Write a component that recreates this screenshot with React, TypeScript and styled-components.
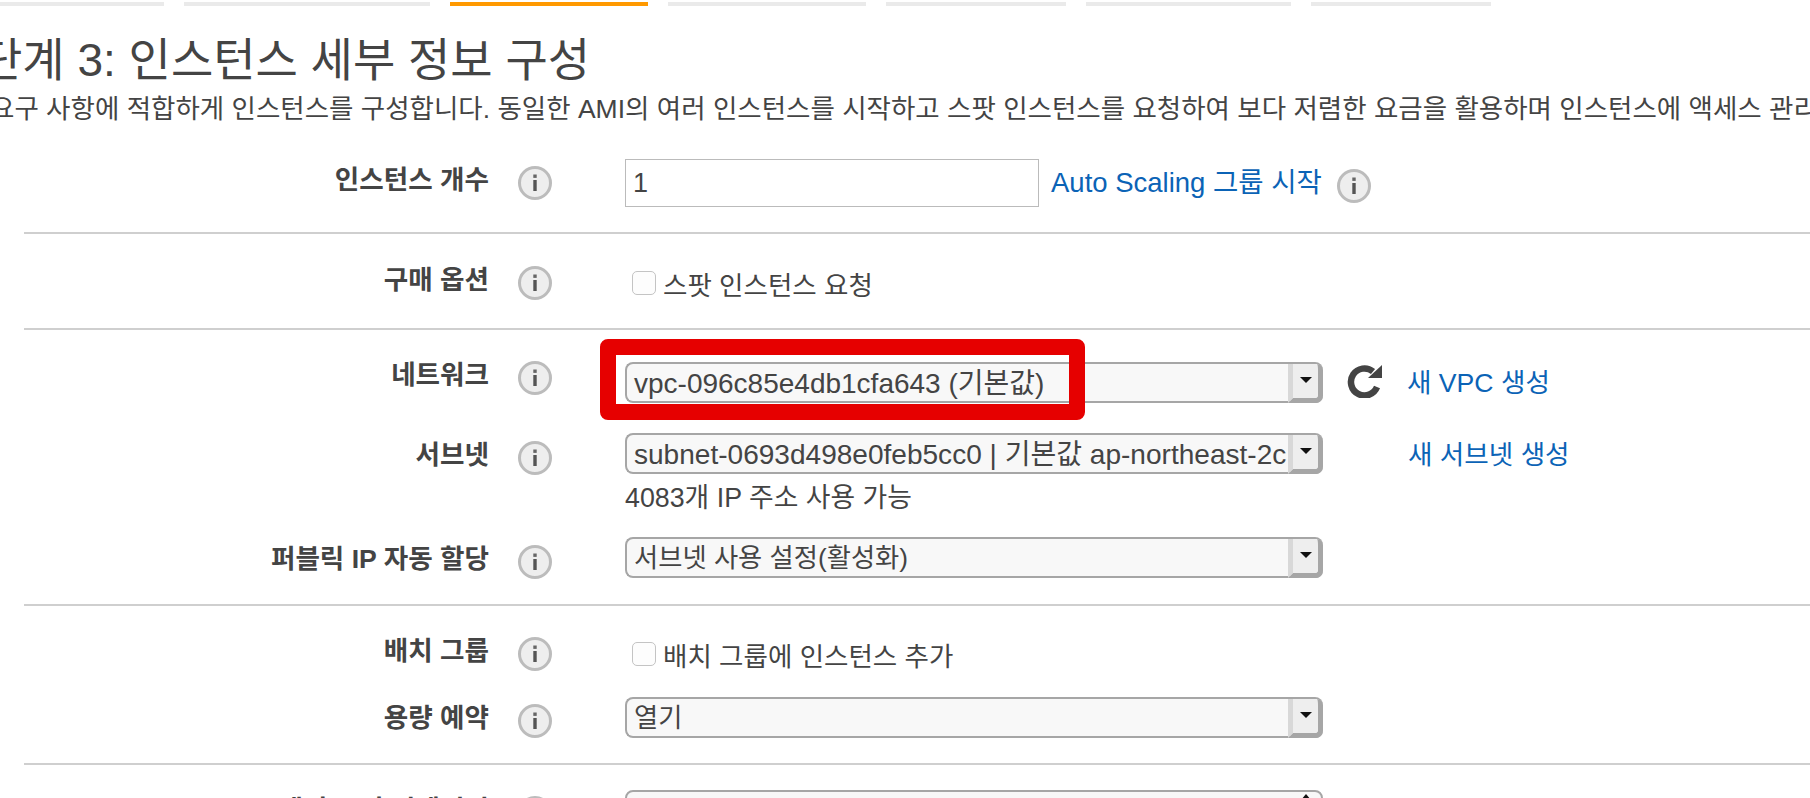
import React from 'react';
import styled, { createGlobalStyle } from 'styled-components';

const GlobalStyle = createGlobalStyle`
  html, body {
    margin: 0;
    padding: 0;
    background: #fff;
  }
`;

const Page = styled.div`
  width: 1810px;
  height: 798px;
  overflow: hidden;
  color: #444;
  font-family: "Liberation Sans", "Noto Sans CJK KR", sans-serif;
`;

const Steps = styled.div`
  display: flex;
  gap: 20px;
  padding-top: 2px;
`;

const Step = styled.div<{ $width: number; $active?: boolean }>`
  width: ${(p) => p.$width}px;
  height: 4px;
  background: ${(p) => (p.$active ? '#ff9900' : '#eaeaea')};
`;

const Title = styled.h1`
  margin: 30px 0 0 -20px;
  font-size: 46px;
  line-height: 48px;
  font-weight: 400;
  white-space: nowrap;
`;

const Intro = styled.p`
  margin: 10px 0 0 -10px;
  font-size: 26.5px;
  line-height: 30px;
  white-space: nowrap;
`;

const Form = styled.div`
  margin: 35px 0 0 24px;
`;

const Section = styled.section<{ $top: number; $bottom: number; $gap?: number; $first?: boolean }>`
  display: flex;
  flex-direction: column;
  gap: ${(p) => p.$gap ?? 30}px;
  padding: ${(p) => p.$top}px 0 ${(p) => p.$bottom}px;
  border-top: ${(p) => (p.$first ? 'none' : '2px solid #cfcfcf')};
`;

const Row = styled.div`
  display: flex;
  align-items: flex-start;
`;

const LabelGroup = styled.div<{ $top: number }>`
  display: flex;
  align-items: flex-start;
  flex: none;
  width: 601px;
  margin-top: ${(p) => p.$top}px;
`;

const Label = styled.div`
  flex: none;
  width: 465px;
  text-align: right;
  font-size: 26.6px;
  font-weight: 700;
  line-height: 30px;
  white-space: nowrap;
`;

const InfoIcon = styled.svg<{ $left: number; $top: number }>`
  flex: none;
  width: 36px;
  height: 36px;
  margin: ${(p) => p.$top}px 0 0 ${(p) => p.$left}px;
`;

const Control = styled.div`
  display: flex;
  align-items: flex-start;
`;

const Stack = styled.div`
  display: flex;
  flex-direction: column;
`;

const TextInput = styled.div`
  box-sizing: border-box;
  width: 414px;
  height: 48px;
  padding-left: 7px;
  border: 1px solid #bbb;
  font-size: 27px;
  line-height: 46px;
`;

const LinkText = styled.a<{ $left: number; $top: number; $size?: number }>`
  margin: ${(p) => p.$top}px 0 0 ${(p) => p.$left}px;
  color: #0b63b6;
  font-size: ${(p) => p.$size ?? 26.6}px;
  line-height: 30px;
  white-space: nowrap;
`;

const CheckRow = styled.label`
  display: flex;
  align-items: center;
  gap: 7px;
  height: 36px;
  margin-left: 7px;
  font-size: 26.5px;
`;

const CheckBox = styled.span`
  box-sizing: border-box;
  width: 24px;
  height: 24px;
  border: 1px solid #c4c4c4;
  border-radius: 5px;
  background: #fdfdfd;
`;

const SelectBox = styled.div`
  position: relative;
  box-sizing: border-box;
  display: flex;
  flex: none;
  width: 698px;
  height: 41px;
  border: 2px solid #a6a6a6;
  border-right-width: 0;
  border-radius: 8px;
  background: #f8f8f8;
`;

const SelectValue = styled.div<{ $size: number }>`
  flex: 1;
  min-width: 0;
  padding-left: 7px;
  overflow: hidden;
  font-size: ${(p) => p.$size}px;
  line-height: 39px;
  white-space: nowrap;
`;

const SelectButton = styled.div`
  box-sizing: border-box;
  flex: none;
  display: flex;
  align-items: center;
  justify-content: center;
  width: 35px;
  height: 39px;
  margin-bottom: -2px;
  padding-bottom: 2px;
  border-left: 5px solid #d8d8d8;
  border-right: 5px solid #a6a6a6;
  border-bottom: 5px solid #a6a6a6;
  border-top-right-radius: 6px;
  border-bottom-right-radius: 7px;
  background: #eeeeee;

  &::after {
    content: '';
    border-left: 6px solid transparent;
    border-right: 6px solid transparent;
    border-top: 6px solid #111;
  }
`;

/* the last select is cut by the window: only the tip of its up arrow shows */
const ListBox = styled(SelectBox)`
  justify-content: flex-end;
  padding-right: 10px;
  border-right-width: 2px;

  &::after {
    content: '';
    margin-top: 2px;
    height: 0;
    border-left: 5px solid transparent;
    border-right: 5px solid transparent;
    border-bottom: 6px solid #111;
  }
`;

const RedFrame = styled.div`
  position: absolute;
  left: -27px;
  top: -25px;
  box-sizing: border-box;
  width: 485px;
  height: 81px;
  border: 16px solid #e60000;
  border-radius: 8px;
`;

const RefreshIcon = styled.svg`
  flex: none;
  width: 36px;
  height: 34px;
  margin: 2px 0 0 23px;
`;

const Note = styled.div`
  margin: 9px 0 -6px;
  font-size: 26.8px;
  line-height: 30px;
`;

const Info = ({ left = 28, top = 0 }: { left?: number; top?: number }) => (
  <InfoIcon $left={left} $top={top} viewBox="0 0 36 36">
    <circle cx="18" cy="18" r="15.5" fill="#eeeeee" stroke="#bcbcbc" strokeWidth="3" />
    <rect x="16.3" y="15" width="3.4" height="11" fill="#555" />
    <rect x="16.3" y="9.5" width="3.4" height="3.4" fill="#666" />
  </InfoIcon>
);

const Select = ({ value, size = 26.3, children }: { value: string; size?: number; children?: React.ReactNode }) => (
  <SelectBox>
    <SelectValue $size={size}>{value}</SelectValue>
    <SelectButton />
    {children}
  </SelectBox>
);

const stepWidths = [164, 246, 198, 198, 180, 205, 180];

const App = () => (
  <Page>
    <GlobalStyle />
    <Steps>
      {stepWidths.map((w, i) => (
        <Step key={i} $width={w} $active={i === 2} />
      ))}
    </Steps>
    <Title>단계 3: 인스턴스 세부 정보 구성</Title>
    <Intro>
      요구 사항에 적합하게 인스턴스를 구성합니다. 동일한 AMI의 여러 인스턴스를 시작하고 스팟 인스턴스를 요청하여 보다 저렴한 요금을 활용하며
      인스턴스에 액세스 관리 역할을 할당하는 등 다양한 기능을 사용할 수 있습니다.
    </Intro>
    <Form>
      <Section $first $top={0} $bottom={25}>
        <Row>
          <LabelGroup $top={6}>
            <Label>인스턴스 개수</Label>
            <Info />
          </LabelGroup>
          <Control>
            <TextInput>1</TextInput>
            <LinkText $left={12} $top={9} $size={27.5}>Auto Scaling 그룹 시작</LinkText>
            <Info left={14} top={9} />
          </Control>
        </Row>
      </Section>
      <Section $top={31} $bottom={27}>
        <Row>
          <LabelGroup $top={0}>
            <Label>구매 옵션</Label>
            <Info />
          </LabelGroup>
          <CheckRow>
            <CheckBox />
            스팟 인스턴스 요청
          </CheckRow>
        </Row>
      </Section>
      <Section $top={32} $bottom={24}>
        <Row>
          <LabelGroup $top={-2}>
            <Label>네트워크</Label>
            <Info />
          </LabelGroup>
          <Control>
            <Select value="vpc-096c85e4db1cfa643 (기본값)" size={28}>
              <RedFrame />
            </Select>
            <RefreshIcon viewBox="0 0 36 34">
              <path d="M31 23 A13.5 13.5 0 1 1 27 7.5" fill="none" stroke="#444" strokeWidth="6.5" />
              <polygon points="36,1 36,14 22,14" fill="#444" />
            </RefreshIcon>
            <LinkText $left={25} $top={6}>새 VPC 생성</LinkText>
          </Control>
        </Row>
        <Row>
          <LabelGroup $top={7}>
            <Label>서브넷</Label>
            <Info />
          </LabelGroup>
          <Stack>
            <Control>
              <Select value="subnet-0693d498e0feb5cc0 | 기본값 ap-northeast-2c" size={28.05} />
              <LinkText $left={85} $top={7}>새 서브넷 생성</LinkText>
            </Control>
            <Note>4083개 IP 주소 사용 가능</Note>
          </Stack>
        </Row>
        <Row>
          <LabelGroup $top={7}>
            <Label>퍼블릭 IP 자동 할당</Label>
            <Info />
          </LabelGroup>
          <Select value="서브넷 사용 설정(활성화)" />
        </Row>
      </Section>
      <Section $top={30} $bottom={24} $gap={25}>
        <Row>
          <LabelGroup $top={0}>
            <Label>배치 그룹</Label>
            <Info />
          </LabelGroup>
          <CheckRow>
            <CheckBox />
            배치 그룹에 인스턴스 추가
          </CheckRow>
        </Row>
        <Row>
          <LabelGroup $top={6}>
            <Label>용량 예약</Label>
            <Info />
          </LabelGroup>
          <Select value="열기" />
        </Row>
      </Section>
      <Section $top={25} $bottom={25}>
        <Row>
          <LabelGroup $top={5}>
            <Label>도메인 조인 디렉터리</Label>
            <Info />
          </LabelGroup>
          <ListBox />
        </Row>
      </Section>
    </Form>
  </Page>
);

export default App;
